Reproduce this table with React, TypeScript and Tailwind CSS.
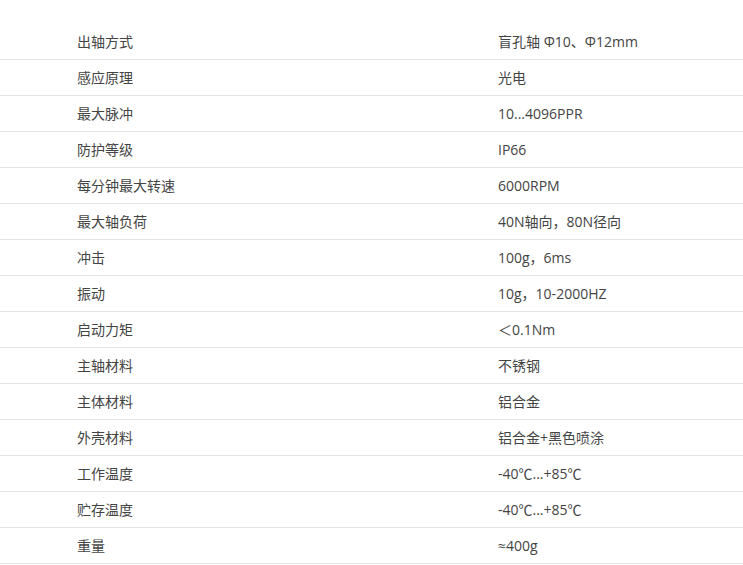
import React from "react";

const rows: [string, string][] = [
  ["出轴方式", "盲孔轴 Φ10、Φ12mm"],
  ["感应原理", "光电"],
  ["最大脉冲", "10...4096PPR"],
  ["防护等级", "IP66"],
  ["每分钟最大转速", "6000RPM"],
  ["最大轴负荷", "40N轴向，80N径向"],
  ["冲击", "100g，6ms"],
  ["振动", "10g，10-2000HZ"],
  ["启动力矩", "＜0.1Nm"],
  ["主轴材料", "不锈钢"],
  ["主体材料", "铝合金"],
  ["外壳材料", "铝合金+黑色喷涂"],
  ["工作温度", "-40℃...+85℃"],
  ["贮存温度", "-40℃...+85℃"],
  ["重量", "≈400g"],
];

export default function App() {
  return (
    <div
      className="w-[743px] h-[565px] bg-white pt-[24px] text-[14px] text-[#444444]"
      style={{ fontFamily: '"Open Sans", "Noto Sans CJK SC", sans-serif' }}
    >
      {rows.map(([k, v], i) => (
        <div key={i} className="flex h-[36px] items-center border-b border-[#e3e3e3]">
          <div className="w-[498px] shrink-0 pl-[77px]">{k}</div>
          <div className="flex-1">{v}</div>
        </div>
      ))}
    </div>
  );
}
